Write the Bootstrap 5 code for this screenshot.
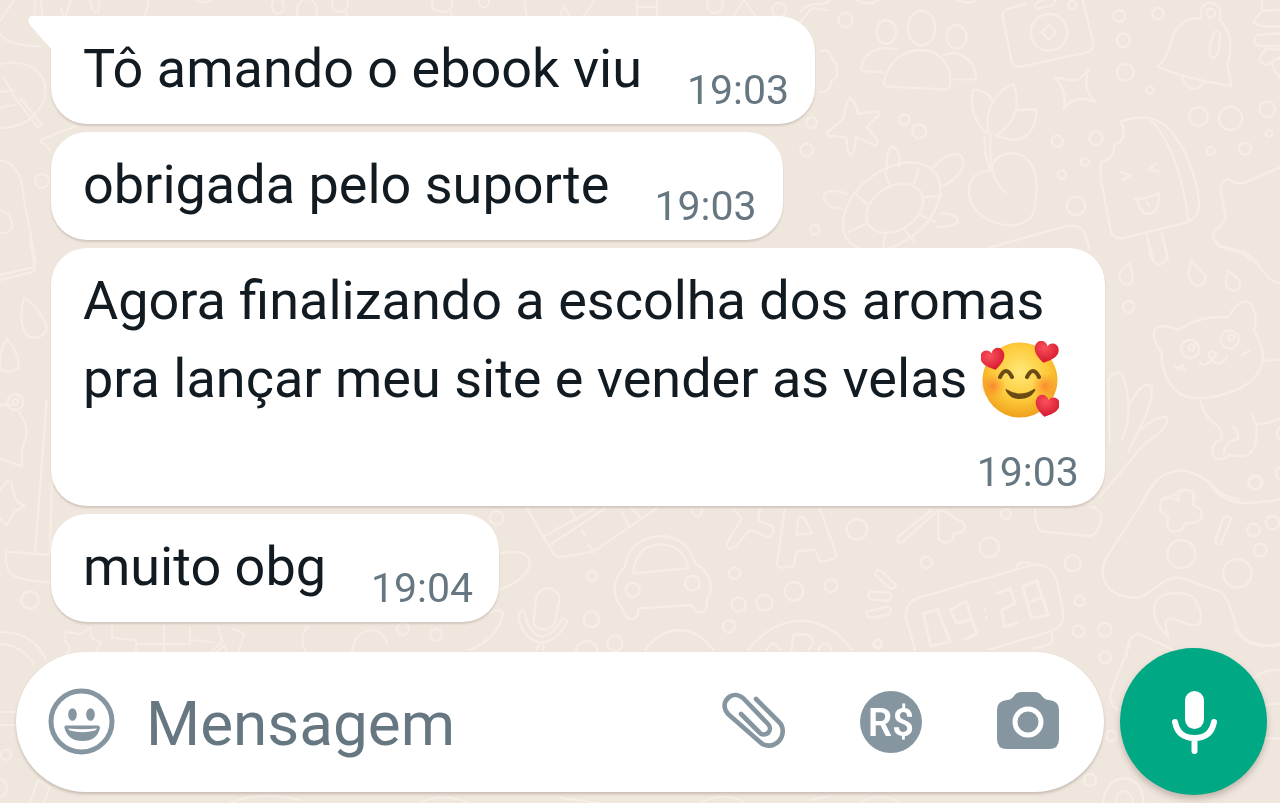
<!DOCTYPE html>
<html lang="pt-BR">
<head>
<meta charset="utf-8">
<meta name="viewport" content="width=device-width, initial-scale=1">
<title>Conversa</title>
<link href="https://cdn.jsdelivr.net/npm/bootstrap@5.3.0/dist/css/bootstrap.min.css" rel="stylesheet">
<style>
  body { background: #efe6dd; color: #111b21; font-family: Roboto, "Noto Sans", sans-serif; }
  .wallpaper { position: fixed; inset: 0; z-index: -1; width: 100%; height: 100%; }
  .chat { padding: 16px 16px 24px 51px; gap: 8px; }
  .bubble { position: relative; max-width: 100%; background: #fff; border-radius: 36px; padding: 14px 26px 10px 32px; box-shadow: 0 2px 2px rgba(110, 90, 80, .22); }
  .bubble p { font-size: 54px; line-height: 78px; }
  .bubble time { font-size: 41px; line-height: 48px; color: #667781; }
  .bubble-line p { margin: 0 45px 6px 0; }
  .bubble-first { border-top-left-radius: 0; }
  .bubble-long p { margin: 0 20px 30px 0; }
  .tail { position: absolute; left: -23px; top: 0; }
  .emoji { width: 78px; height: 78px; margin: -4px 0; vertical-align: -18px; }
  .composer { padding: 0 13px 8px 16px; gap: 16px; }
  .field { min-width: 0; background: #fff; height: 140px; border-radius: 70px; padding: 0 44px 0 32px; box-shadow: 0 2px 3px rgba(110, 90, 80, .3); }
  .field input { border: 0; background: none; outline: 0; width: 0; min-width: 0; font-size: 62px; line-height: 72px; padding: 0; margin: 4px 16px 0 31px; color: #111b21; }
  .field input::placeholder { color: #667781; opacity: 1; }
  .tools { gap: 73px; }
  .tool { border: 0; background: none; padding: 0; color: #8696a0; line-height: 0; }
  .mic { width: 147px; height: 147px; border: 0; padding: 0; background: #00a884; box-shadow: 0 4px 6px rgba(110, 90, 80, .35); }
</style>
</head>
<body>
<svg class="wallpaper" viewBox="0 0 1280 803" preserveAspectRatio="xMidYMin slice" fill="none" stroke="#f6eee6" stroke-width="7" stroke-linecap="round" stroke-linejoin="round" aria-hidden="true">
  <!-- people, camera, bell, star, turtle, cherry, ice lolly -->
  <g transform="translate(800 0) scale(.3333)">
    <ellipse cx="259" cy="96" rx="29" ry="36"/><ellipse cx="365" cy="84" rx="41" ry="52"/><ellipse cx="470" cy="110" rx="30" ry="35"/>
    <path d="M252 250C262 180 315 150 365 150C415 150 460 200 450 255Q447 269 435 268L262 260Q250 258 252 250ZM250 217L190 213Q182 210 184 200C195 155 235 135 290 148M432 165C480 145 530 185 528 238L462 238"/>
    <path d="M676 12L625 26Q605 32 608 50L635 185Q642 204 662 200L860 158Q882 150 880 128L848 0M705 20Q705 4 730 0M765 0Q765 15 745 20L712 25"/>
    <circle cx="747" cy="97" r="55"/><path d="M725 97L747 75L769 97L747 119Z"/><circle cx="817" cy="15" r="12"/>
    <path d="M1072 200Q1100 180 1112 130C1125 75 1160 50 1205 55Q1195 10 1232 8Q1270 15 1258 60C1300 100 1295 150 1282 195L1294 258L1220 245L1140 225ZM1147 232Q1160 268 1185 267Q1205 262 1212 246"/>
    <circle cx="1232" cy="39" r="13"/><path d="M1246 95Q1225 130 1229 165Q1240 180 1252 165Q1262 130 1260 100Q1254 90 1246 95Z"/>
    <path d="M1440 30L1390 32Q1360 55 1362 70Q1390 85 1440 78M1440 100L1370 105Q1355 130 1375 137L1440 138M1440 150L1400 145Q1375 170 1380 185L1400 195L1440 170M1385 0L1387 32M1440 175Q1395 180 1440 232"/>
    <path d="M150 293Q140 300 130 355L85 395Q75 405 90 408L138 412L145 458Q155 470 162 455L168 412L225 436Q238 434 230 418L200 380L236 345Q238 332 222 335L175 342Q170 310 150 293Z"/>
    <path d="M765 232L812 240Q840 245 866 208Q845 265 884 305Q825 280 790 327Q805 280 765 232Z"/>
    <ellipse cx="275" cy="620" rx="165" ry="108" transform="rotate(-38 275 620)"/><ellipse cx="284" cy="625" rx="92" ry="65" transform="rotate(-32 284 625)"/>
    <path d="M262 510Q255 450 278 440Q303 450 297 500M395 510Q430 460 470 462Q500 470 485 510Q455 550 428 558M140 582Q80 560 70 590Q75 625 125 625M420 640Q470 640 475 665Q455 685 408 680M255 515L270 562M355 508L343 550M165 580L200 612M425 586L372 592M145 697L195 672M405 665L360 645M345 728L310 685M250 742L255 700"/>
    <path d="M560 400C515 360 510 300 520 270Q560 270 575 300M565 400C555 330 580 280 640 252C660 310 655 360 590 405M650 330L710 328Q705 420 635 420Q610 415 590 408M555 410Q550 460 572 510M574 400Q565 450 577 512Q590 555 618 578M572 512C500 510 480 600 550 650C610 690 680 680 700 640C715 570 720 500 665 465C620 450 580 470 577 505"/>
    <path d="M960 365Q1050 335 1100 380C1150 430 1190 520 1198 610Q1200 650 1160 668L965 715Q940 715 933 695L903 540Q900 505 903 485Q945 480 942 432Q975 430 970 380ZM1050 356C1110 420 1150 530 1165 660M1040 705L1060 780M1085 700L1105 780M964 516L990 527L968 541M1068 490L1047 508L1074 515M1005 597Q1045 597 1077 579Q1078 640 1045 642Q1020 640 1012 600M1040 605L1048 615"/>
    <path d="M1440 502L1330 550Q1300 550 1285 538Q1262 538 1262 570Q1270 620 1278 650Q1270 675 1245 690Q1230 720 1260 740Q1320 745 1350 780M570 742L800 678Q840 672 855 700L868 745M62 155Q80 145 90 160L95 178Q115 185 110 230L93 245Q90 280 60 275M0 35Q20 10 60 12Q90 10 88 0M170 0Q205 20 235 0M470 0Q510 14 530 0"/>
    <circle cx="136" cy="60" r="21"/><circle cx="35" cy="368" r="16"/><circle cx="20" cy="450" r="19"/><circle cx="313" cy="359" r="16"/><circle cx="358" cy="394" r="21"/><circle cx="958" cy="48" r="18"/><circle cx="1074" cy="41" r="17"/><circle cx="970" cy="121" r="20"/><circle cx="976" cy="217" r="25"/><circle cx="1050" cy="271" r="11"/><circle cx="772" cy="423" r="17"/><circle cx="888" cy="415" r="20"/><circle cx="855" cy="486" r="12"/><circle cx="786" cy="523" r="13"/><circle cx="828" cy="618" r="28"/><circle cx="1195" cy="350" r="28"/><circle cx="1292" cy="355" r="35"/><circle cx="1402" cy="328" r="23"/><circle cx="1407" cy="400" r="10"/><circle cx="1232" cy="453" r="12"/><circle cx="1335" cy="446" r="18"/><circle cx="44" cy="689" r="14"/>
  </g>
  <!-- cat, drops, leaves -->
  <g transform="translate(1080 240) scale(.3333)">
    <path d="M245 340C200 270 220 240 295 270Q360 225 445 232C470 185 500 175 515 195Q535 230 522 272C570 350 550 400 490 440C420 475 340 485 300 462C260 430 245 390 245 340ZM362 485C380 560 430 540 425 600C395 600 385 650 415 657Q440 660 445 645C500 655 535 650 530 555Q520 540 518 522M432 640Q435 600 475 597Q475 575 460 560M555 363L600 358M530 553Q570 552 600 535"/>
    <circle cx="330" cy="327" r="27"/><circle cx="449" cy="298" r="27"/><circle cx="335" cy="322" r="9"/><circle cx="454" cy="293" r="9"/>
    <path d="M385 340Q400 328 408 342Q405 355 397 355Q385 352 385 340M360 365Q365 385 397 360Q420 385 442 350M285 380L315 388M310 375L292 390M486 345L508 332"/>
    <path d="M150 70Q115 90 117 110Q125 135 145 134Q160 128 158 110ZM335 60Q325 90 326 110Q340 140 360 137Q380 128 376 108Q355 85 335 60ZM445 92Q435 120 440 140Q455 155 470 152Q482 140 480 125Q465 105 445 92ZM205 0L210 45Q220 75 240 73Q262 65 260 40L250 0M405 0Q425 35 480 32C530 40 550 125 600 130"/>
    <path d="M90 610L85 420Q100 390 125 400C150 460 155 540 125 600M145 500Q190 415 215 440C220 500 180 560 145 635M180 570Q240 520 262 535Q270 560 190 615L60 770M190 780Q230 690 310 692C370 700 400 745 430 765L475 780M250 775L285 765Q300 740 340 755L345 780"/>
    <circle cx="146" cy="200" r="17"/><circle cx="526" cy="727" r="21"/><circle cx="610" cy="580" r="20"/><circle cx="610" cy="700" r="22"/>
  </g>
  <!-- car, microphone, letter A -->
  <g transform="translate(480 490) scale(.3333)">
    <path d="M140 55L220 190Q230 205 250 200L340 185L530 55M190 140L345 55M210 165L375 55M270 55L290 90M305 120L315 135M325 165L345 185M425 65L445 105M455 55L485 85"/>
    <path d="M435 230C440 170 490 138 550 138C610 145 635 180 645 220C700 250 700 300 680 330C685 375 655 380 635 345L475 355C480 395 435 400 430 360C395 320 395 270 435 230ZM460 250Q465 165 545 163Q615 170 625 235Z"/>
    <circle cx="458" cy="300" r="21"/><circle cx="637" cy="280" r="22"/>
    <path d="M160 400L168 325Q180 290 210 295Q240 305 238 330L225 395Q215 420 190 418Q165 415 160 400ZM125 362Q110 370 118 395Q135 450 185 458Q235 450 262 395Q255 380 243 392Q220 435 185 440Q145 430 135 370Q130 360 125 362ZM170 480L178 460M190 480L190 460M60 190Q150 175 150 220Q140 270 60 298M-30 480Q60 440 68 370Q60 350 30 370"/>
    <path d="M760 55L785 85L740 160Q740 185 765 170L810 120L865 142Q885 130 880 110L835 92L840 55M915 55L890 225Q895 240 940 228L950 185L1005 178L1020 215Q1050 215 1072 200L1020 55M950 135L955 85Q970 75 975 90L997 130ZM635 60Q640 80 655 80Q670 70 665 55"/>
    <path d="M495 480Q540 420 600 420Q660 425 700 480M805 480Q870 395 965 392Q1060 400 1115 480M860 480Q880 440 900 480M935 480L940 435Q1000 425 1000 460L985 480M1015 480Q1035 440 1055 480"/>
    <path d="M1190 240L1185 255L1230 295Q1245 298 1248 285L1205 243ZM1170 305Q1158 318 1172 328L1225 333Q1240 320 1230 308ZM1160 365Q1158 385 1175 384L1225 373Q1240 358 1225 350Z"/>
    <circle cx="50" cy="83" r="20"/><circle cx="336" cy="258" r="15"/><circle cx="334" cy="388" r="23"/><circle cx="320" cy="485" r="32"/><circle cx="405" cy="460" r="23"/><circle cx="764" cy="250" r="17"/><circle cx="776" cy="344" r="21"/><circle cx="853" cy="338" r="24"/><circle cx="747" cy="409" r="18"/><circle cx="942" cy="304" r="28"/><circle cx="1053" cy="287" r="19"/><circle cx="1131" cy="118" r="31"/><circle cx="1193" cy="463" r="13"/>
  </g>
  <!-- clock and gamepad -->
  <g transform="translate(860 480) scale(.3333)">
    <path d="M165 510L138 415Q135 370 170 355L520 254Q570 250 590 300L610 400Q612 440 570 455L390 508M470 260Q480 240 510 250M575 460L578 485Q560 500 520 505"/>
    <path stroke-width="9" d="M190 400L233 388L270 485L212 498ZM330 420L290 430L272 390L318 364L350 462L315 478M410 340L450 325L465 370L425 390L432 440L470 430M488 320L530 302L565 405L515 415ZM500 370L545 352M376 388L374 392M380 412L378 416"/>
    <path d="M215 90L115 170Q105 190 125 188L235 90L235 175Q255 200 280 175Q275 160 305 155Q325 145 305 125L245 90M525 90Q525 150 550 155L690 168Q715 165 725 110Q720 85 690 80M890 0L735 240C710 310 760 360 840 352C890 330 910 290 960 292L1080 335C1130 370 1110 490 1200 497Q1240 500 1260 490M1045 0Q1070 65 1160 70Q1230 65 1260 58"/>
    <path d="M955 50Q965 20 998 35L1000 75Q1030 85 1025 110Q1020 130 975 130Q965 160 935 155Q915 145 925 110Q890 95 905 60Q920 50 955 60ZM1090 115L1065 185Q1075 198 1083 190L1114 115Q1105 100 1090 115Z"/>
    <path d="M925 470C880 430 860 360 920 342Q1000 330 1010 370Q1030 400 1020 430Q1005 445 950 420Q900 400 925 465M800 530Q800 460 840 463L940 510"/>
    <circle cx="437" cy="102" r="15"/><circle cx="388" cy="202" r="29"/><circle cx="200" cy="247" r="17"/><circle cx="638" cy="250" r="24"/><circle cx="659" cy="363" r="15"/><circle cx="655" cy="454" r="17"/><circle cx="734" cy="449" r="20"/><circle cx="964" cy="222" r="42"/><circle cx="1132" cy="280" r="43"/><circle cx="1181" cy="150" r="19"/><circle cx="1201" cy="210" r="19"/><circle cx="1238" cy="128" r="20"/><circle cx="1186" cy="8" r="19"/><circle cx="53" cy="490" r="11"/>
  </g>
  <!-- left edge, top -->
  <g stroke-width="2">
    <path d="M0 21L14 0M0 34Q8 46 40 46M35 0L34 26M41 0L43 26M62 27L71 0M67 27L61 8M90 0Q92 14 98 12L100 0M148 0Q148 18 133 28M0 64C34 58 50 76 44 100C34 124 14 128 0 128M4 78L14 96L38 128L42 124L20 98M0 92L14 90M14 105L0 108M40 140L76 126M40 140L50 150M0 160C24 165 22 190 24 200L36 262M0 210Q14 214 12 228Q8 236 0 232M195 0Q204 4 212 0"/>
    <path d="M432 0Q430 12 444 12Q454 10 452 0M452 12L448 26M525 0Q524 18 533 27M556 27L564 6Q576 36 594 0M637 0L637 26M657 0L657 26M637 7L657 7M637 22L657 22M728 25L744 0L762 25M796 27L812 8L827 10"/>
    <circle cx="42" cy="181" r="7"/><ellipse cx="278" cy="6" rx="6" ry="8"/><ellipse cx="307" cy="11" rx="10" ry="12"/><circle cx="340" cy="4" r="8"/><path d="M346 12L350 26"/><circle cx="484" cy="2" r="5"/><circle cx="715" cy="5" r="8"/><circle cx="779" cy="10" r="7"/>
  </g>
  <g transform="translate(0 240) scale(.3333)">
    <path d="M90 0L105 85Q105 95 90 98L0 120M0 105L98 82M72 172Q55 230 75 280Q105 310 138 275Q145 230 72 172ZM22 298Q-5 330 0 385Q25 405 55 385Q60 340 22 298ZM0 495L30 495M55 515Q90 560 75 600Q60 640 67 680L0 655M20 725L35 725Q40 760 50 785L73 797L45 815L20 855L0 835M0 750L20 725M140 480L105 940M160 560L150 940M150 945L20 935Q10 960 30 1000Q50 1020 150 1028"/>
    <circle cx="46" cy="486" r="24"/><circle cx="46" cy="486" r="9"/><circle cx="90" cy="1080" r="26"/>
  </g>
  <!-- bottom edges -->
  <g stroke-width="2">
    <path d="M0 632Q34 632 46 660M0 644Q22 645 34 664M64 659L70 647L64 640L66 632L80 634L90 628L92 638L101 642L96 652L102 660M112 626L112 638L136 640L136 662M136 644L190 644L190 628M164 626L164 662M190 640L212 642M218 626L222 642L206 656M232 628L244 634L236 660M204 662L224 646L232 660M308 626Q296 640 310 660M352 662Q350 632 372 630Q384 632 388 644"/>
    <circle cx="403" cy="629" r="6"/><circle cx="436" cy="635" r="6"/>
    <path d="M0 712L22 712M0 725L20 725M30 803L38 780L50 787L44 803M230 803Q260 790 300 800M420 803Q440 792 470 803M560 798L600 803M700 803Q725 790 745 803M810 800L830 796M860 803Q880 790 900 803"/>
    <circle cx="6" cy="755" r="5"/><circle cx="-2" cy="788" r="9"/>
  </g>
  <g transform="translate(1080 630) scale(.3333)">
    <path d="M150 40L95 180Q80 215 115 240M465 0Q510 55 600 45M520 145Q560 115 600 120M555 225L600 220M555 325L600 325M70 519Q75 450 130 445Q190 450 190 519M105 519Q110 485 130 482Q155 485 160 519"/>
    <circle cx="75" cy="83" r="17"/><circle cx="95" cy="318" r="16"/><circle cx="30" cy="450" r="18"/>
  </g>
</svg>

<div class="d-flex flex-column min-vh-100">
  <main class="chat d-flex flex-column align-items-start flex-grow-1">
    <article class="bubble bubble-line bubble-first d-flex align-items-end">
      <svg class="tail" width="24" height="36" viewBox="0 0 24 36" fill="#fff" aria-hidden="true"><path d="M24 0H5C0 0 -1 5 2 9L24 34Z"/></svg>
      <p>Tô amando o ebook viu</p><time datetime="19:03">19:03</time>
    </article>
    <article class="bubble bubble-line d-flex align-items-end">
      <p>obrigada pelo suporte</p><time datetime="19:03">19:03</time>
    </article>
    <article class="bubble bubble-long d-flex flex-column">
      <p>Agora finalizando a escolha dos aromas<br>pra lançar meu site e vender as velas
        <svg class="emoji" viewBox="0 0 78 78" role="img" aria-label="rosto sorridente com corações">
          <defs>
            <radialGradient id="face" cx=".5" cy=".4" r=".6"><stop offset="0" stop-color="#ffe979"/><stop offset=".6" stop-color="#fdcb3a"/><stop offset="1" stop-color="#f0a01c"/></radialGradient>
            <radialGradient id="cheek"><stop offset="0" stop-color="#f9752b" stop-opacity=".75"/><stop offset="1" stop-color="#f98a2b" stop-opacity="0"/></radialGradient>
            <radialGradient id="love" cx=".4" cy=".3" r=".7"><stop offset="0" stop-color="#f9515c"/><stop offset="1" stop-color="#d5182f"/></radialGradient>
            <path id="heart" d="M0 11C-7 7-13 2-12-4C-11-11-3-12 0-6C3-12 11-11 12-4C13 2 7 7 0 11Z"/>
          </defs>
          <circle cx="39" cy="39" r="37.500" fill="url(#face)"/>
          <circle cx="12" cy="45" r="13" fill="url(#cheek)"/><circle cx="64" cy="45" r="13" fill="url(#cheek)"/>
          <path fill="none" stroke="#6b4a14" stroke-linecap="round" stroke-width="4" d="M19 36Q25 24 31 36M46 36Q52 24 58 36"/>
          <path fill="#6b4a14" d="M25 48Q39 57 53 48Q55 47 54 50Q49 58 39 58Q29 58 25 50Q24 47 25 48Z"/>
          <use href="#heart" fill="url(#love)" transform="translate(12 18) rotate(-14)"/>
          <use href="#heart" fill="url(#love)" transform="translate(65 11) rotate(14)"/>
          <use href="#heart" fill="url(#love)" transform="translate(66 65) rotate(14)"/>
        </svg></p>
      <time class="align-self-end" datetime="19:03">19:03</time>
    </article>
    <article class="bubble bubble-line d-flex align-items-end">
      <p>muito obg</p><time datetime="19:04">19:04</time>
    </article>
  </main>

  <form class="composer d-flex align-items-center">
    <div class="field d-flex align-items-center flex-grow-1">
      <button type="button" class="tool flex-shrink-0" aria-label="Emoji">
        <svg width="67" height="67" viewBox="0 0 67 67" fill="currentColor"><circle cx="33.500" cy="33.500" r="30.500" fill="none" stroke="currentColor" stroke-width="5"/><ellipse cx="24.500" cy="26.500" rx="4.300" ry="6.300"/><ellipse cx="42.500" cy="26.500" rx="4.300" ry="6.300"/><path fill-rule="evenodd" d="M18 37.500H50Q52 37.500 52 40Q49 53 34.500 53Q20 53 16.500 40Q16 37.500 18 37.500ZM20 40.500Q21 42 22 42.500Q34 46 47 42.500Q48 42 49 40.500Q34 42 20 40.500Z"/></svg>
      </button>
      <input type="text" class="flex-grow-1" placeholder="Mensagem" aria-label="Mensagem">
      <div class="tools d-flex align-items-center flex-shrink-0">
        <button type="button" class="tool" aria-label="Anexar">
          <svg width="64" height="64" viewBox="0 0 64 64" fill="none" stroke="currentColor" stroke-width="4.600" stroke-linecap="round" stroke-linejoin="round"><path d="M34 9L57 32C62 37 62 45 57 51C51 57 43 57 38 52L6 24C1 18 2 12 6 8C10 4 16 4 21 8L46 34C49 37 48 41 46 43C43 45 39 45 37 42L19 24"/></svg>
        </button>
        <button type="button" class="tool" aria-label="Pagamento">
          <svg width="64" height="64" viewBox="0 0 64 64"><circle cx="32" cy="32" r="31" fill="currentColor"/><text x="32" y="46" text-anchor="middle" font-family="Roboto" font-weight="600" font-size="38" fill="#fff">R$</text></svg>
        </button>
        <button type="button" class="tool" aria-label="Câmera">
          <svg width="64" height="64" viewBox="0 0 64 64" fill="currentColor"><path d="M25 2H39Q43 2 46 6Q49 10 53 10Q63 11 63 20V49Q63 59 53 59H11Q1 59 1 49V20Q1 11 11 10Q15 10 18 6Q21 2 25 2Z"/><circle cx="32" cy="32" r="13" fill="none" stroke="#fff" stroke-width="5"/></svg>
        </button>
      </div>
    </div>
    <button type="button" class="mic rounded-circle flex-shrink-0" aria-label="Gravar áudio">
      <svg width="48" height="66" viewBox="0 0 48 66" fill="none" stroke="#fff" stroke-width="6" stroke-linecap="round"><rect x="15" y="2" width="19" height="38" rx="9.500" fill="#fff" stroke="none"/><path d="M5 33Q8 49 24.500 49Q41 49 44 33M24.500 49V62"/></svg>
    </button>
  </form>
</div>
<script src="https://cdn.jsdelivr.net/npm/bootstrap@5.3.0/dist/js/bootstrap.bundle.min.js"></script>
</body>
</html>
